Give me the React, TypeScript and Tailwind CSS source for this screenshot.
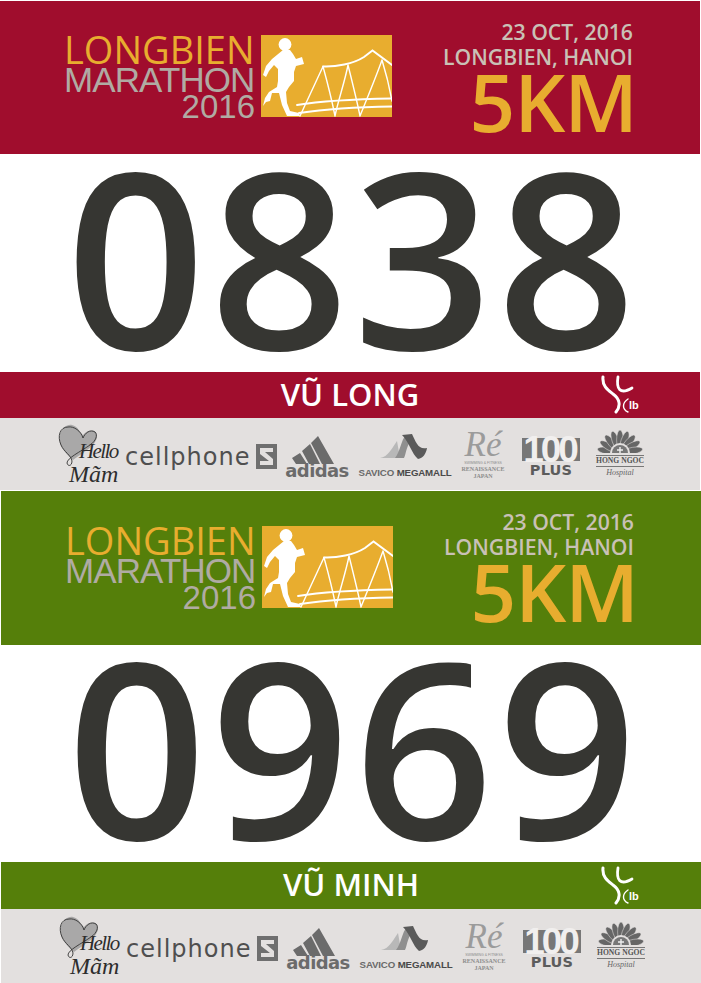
import React from 'react';

const openSans = "font-['Open_Sans',sans-serif]";
const arial = "font-['Liberation_Sans',Arial,sans-serif]";
const dejavu = "font-['DejaVu_Sans',sans-serif]";
const serif = "font-['Liberation_Serif',serif]";

const petals = [-80, -60, -40, -20, 0, 20, 40, 60, 80];

function LogoMark() {
  return (
    <svg viewBox="0 0 131 82" className="w-[131px] h-[82px] shrink-0 bg-[#e8ad2f]">
      {/* runner */}
      <g fill="#fff">
        <circle cx="24" cy="9.5" r="6.4" />
        <path d="M22 15 L29 15 L32 19 L35 24 L41 22 L43 29 L35 31 L33 37 L33 46 L28 52 L25 57 L26 68 L29 76 L38 78 L39 81 L26 81 L21 70 L18 58 L11 58 L9 66 L5 67 L2 71 L4 63 L8 57 L16 52 L17 46 L17 34 L13 30 L8 36 L5 42 L2 40 L5 31 L11 24 Z" />
      </g>
      {/* bridge */}
      <g fill="none" stroke="#fff" strokeWidth="1.4" strokeLinecap="round">
        <path d="M62 31.5 C75 32 92 29 103 22 L111.5 15.5 L131 30" strokeWidth="2" />
        <path d="M62 31.5 L39 81 M62 31.5 C66 46 71 66 74 81 M87 30 C84 46 77 66 74 81 M87 30 C91 46 96 66 99 81 M121 25 C115 42 105 66 99 81 M121 25 C125 38 129 55 131 66" />
        <path d="M36 70 C60 66 100 64 131 63.5 M38 78 C65 74 100 72 131 71.5" strokeWidth="1.8" />
      </g>
    </svg>
  );
}

function LbMark() {
  return (
    <svg viewBox="0 0 40 40" className="w-[40px] h-[40px]">
      <g fill="none" stroke="#fff" strokeLinecap="round">
        <path d="M2 2 C1 11 7 15 12 19 C19 24 20 31 15 37" strokeWidth="3" />
        <path d="M17 2 C15 14 19 20 31 13" strokeWidth="2.8" />
        <path d="M27 24 C21 28 21 34 27 37" strokeWidth="1.4" />
      </g>
      <text x="28" y="34" fontSize="11" fontWeight="700" fill="#fff" fontFamily="'Liberation Sans',sans-serif">lb</text>
    </svg>
  );
}

function HelloMam() {
  return (
    <div className="relative w-[64px] h-[60px] shrink-0">
      <svg viewBox="0 0 64 60" className="absolute inset-0 w-full h-full">
        <path d="M16 1 C22 2 24 9 27 11 C32 5 41 5 41 12 C41 21 28 28 17 36 C5 26 2 18 4 10 C6 4 11 0 16 1 Z" fill="#a9a8a8" />
        <path d="M12 3 C4 3 1 12 5 21 C8 28 15 31 16 37 C16 42 12 43 11 39 C11 34 24 28 34 21 C40 17 42 11 39 8 C34 5 29 9 27 14 C25 7 18 2 12 3 Z" fill="none" stroke="#333" strokeWidth="0.9" />
      </svg>
      <span className={`absolute left-[23px] top-[17px] ${serif} italic text-[21px] leading-none tracking-[-1.6px] text-[#2d2d2d]`}>Hello</span>
      <span className={`absolute left-[13px] top-[38px] ${serif} italic text-[24px] leading-none text-[#2d2d2d]`}>Mãm</span>
    </div>
  );
}

function Cellphone() {
  return (
    <div className="flex items-center shrink-0 ml-[5px] mt-[5px]">
      <span className={`${dejavu} text-[24px] leading-none tracking-[1px] text-[#4f4f4f] w-[131px] whitespace-nowrap`}>cellphone</span>
      <svg viewBox="0 0 21 25" className="w-[21px] h-[25px]">
        <rect width="21" height="25" fill="#6f6f6f" />
        <path d="M4 4 H17 V8 H9 L17 15 V21 H4 V17 H13 L4 10 Z" fill="#e3e0df" />
      </svg>
    </div>
  );
}

function Adidas() {
  return (
    <div className="flex flex-col items-center w-[64px] ml-[8px] mt-[6px] shrink-0">
      <svg viewBox="0 0 42 28" className="w-[42px] h-[28px] mr-[9px]">
        <path d="M0 22 L8 17 L15 28 L4 28 Z M10 15 L18 8 L28 28 L17 28 Z M19 7 L26 0 L42 28 L30 28 Z" fill="#6b6b6b" />
      </svg>
      <span className={`${dejavu} text-[18px] leading-[14px] tracking-[-0.6px] font-bold text-[#6b6b6b]`}>adidas</span>
    </div>
  );
}

function Savico() {
  return (
    <div className="flex flex-col items-center w-[92px] ml-[10px] mt-[4px] shrink-0">
      <svg viewBox="0 0 47 25" className="w-[47px] h-[25px] mr-[4px]">
        <path d="M0 24 C8 23 12 14 17 7 L20 24 Z" fill="#b8b8b8" />
        <path d="M15 24 C20 18 21 6 26 1 L30 8 C26 14 26 20 24 24 Z" fill="#8f8f8f" />
        <path d="M22 1 L32 0 C36 8 38 16 47 14 C46 20 43 24 38 25 C32 20 29 8 22 1 Z" fill="#5a5a5a" />
      </svg>
      <div className={`${arial} text-[9.7px] leading-none mt-[9px] tracking-[-0.15px] whitespace-nowrap font-bold text-[#6a6a6a]`}>
        SAVICO <span className="text-[#4a4a4a]">MEGAMALL</span>
      </div>
    </div>
  );
}

function Renaissance() {
  return (
    <div className="flex flex-col items-center w-[36px] ml-[14px] shrink-0">
      <span className={`${serif} italic text-[35px] leading-[33px] text-[#9b9b9b]`}>Ré</span>
      <div className={`${arial} text-center text-[#8c8c8c]`}>
        <div className="text-[3.5px] leading-[5px] whitespace-nowrap">SWIMMING & FITNESS</div>
        <div className={`${serif} text-[6px] leading-[6px] font-bold`}>RENAISSANCE</div>
        <div className={`${serif} text-[6px] leading-[8px] font-bold`}>JAPAN</div>
      </div>
    </div>
  );
}

function HundredPlus() {
  return (
    <div className="flex flex-col items-center w-[58px] ml-[21px] mt-[4px] shrink-0">
      <div className="w-[58px] h-[28px] relative flex items-center justify-center">
        <div className="absolute inset-x-0 top-[3px] bottom-[2px] bg-[#777]" />
        <span className={`${arial} relative font-bold text-[37px] leading-none tracking-[-3px] pr-[3px] text-[#f1efee]`}>100</span>
      </div>
      <span className={`${dejavu} font-bold text-[14.5px] leading-[13px] mt-[1px] tracking-[0.2px] text-[#5c5c5c]`}>PLUS</span>
    </div>
  );
}

function HongNgoc() {
  return (
    <div className="flex flex-col items-center w-[48px] ml-[16px] shrink-0">
      <svg viewBox="0 0 48 25" className="w-[48px] h-[25px]">
        <g transform="translate(24 23)">
          {petals.map((deg) => (
            <ellipse key={deg} cx="0" cy="-13" rx="3.4" ry="10" fill="#666" stroke="#e3e0df" strokeWidth="0.5" transform={`rotate(${deg})`} />
          ))}
          <circle r="10" fill="#e3e0df" />
          <circle r="8" fill="#777" />
          <path d="M0 -6 V0 M-3 -3 H3" stroke="#eee" strokeWidth="1.4" />
        </g>
        <rect x="0" y="23" width="48" height="2" fill="#e3e0df" />
      </svg>
      <div className={`${serif} font-bold text-[7.6px] leading-[10px] whitespace-nowrap text-[#555] border-y border-[#777]`}>HONG NGOC</div>
      <div className={`${serif} italic text-[8px] leading-[12px] text-[#666]`}>Hospital</div>
    </div>
  );
}

type BibProps = {
  number: string;
  name: string;
  bg: string;
  wrap: string;
  head: string;
  body: string;
  band: string;
  logos: string;
};

function Bib({ number, name, bg, wrap, head, body, band, logos }: BibProps) {
  return (
    <section className={`w-[700px] ${wrap}`}>
      {/* Header */}
      <div className={`${bg} ${head} flex items-center pl-[64px] pr-[67px]`}>
        <div className="flex items-center gap-[4px] mb-[3px]">
          <div className="text-right w-[193px]">
            <div className={`${openSans} text-[38px] leading-[32px] pr-[3px] font-medium text-[#e8ad2f] whitespace-nowrap`}>LONGBIEN</div>
            <div className={`${arial} text-[35px] leading-[29px] pr-[3px] tracking-[-0.9px] text-[#b0aba3] whitespace-nowrap`}>MARATHON</div>
            <div className={`${arial} text-[33px] leading-[25px] pr-[2px] text-[#b0aba3]`}>2016</div>
          </div>
          <LogoMark />
        </div>
        <div className={`${openSans} ml-auto mb-[3px] text-right`}>
          <div className="text-[21.2px] leading-[25px] font-semibold text-[#c9c1b6]">23 OCT, 2016</div>
          <div className="text-[21.2px] leading-[25px] font-semibold text-[#c9c1b6] whitespace-nowrap">LONGBIEN, HANOI</div>
          <div className="text-[80px] leading-[66px] font-semibold text-[#e8ad2f] tracking-[-1px] -mr-[4px] -mt-[1px]">5KM</div>
        </div>
      </div>
      {/* Number */}
      <div className={`${body} bg-white flex items-center justify-center pb-[17px] pl-[6px]`}>
        <span className={`${openSans} text-[244px] leading-[200px] font-semibold tracking-[4px] text-[#363632]`}>{number}</span>
      </div>
      {/* Name */}
      <div className={`${bg} ${band} grid grid-cols-[1fr_auto_1fr] items-center`}>
        <div />
        <div className={`${openSans} text-[31px] leading-none pb-[2px] font-semibold text-white whitespace-nowrap`}>{name}</div>
        <div className="pl-[182px]"><LbMark /></div>
      </div>
      {/* Sponsors */}
      <div className={`${logos} bg-[#e3e0df] flex items-center pl-[56px]`}>
        <HelloMam />
        <Cellphone />
        <Adidas />
        <Savico />
        <Renaissance />
        <HundredPlus />
        <HongNgoc />
      </div>
    </section>
  );
}

export default function App() {
  return (
    <div className="w-[701px] h-[983px] bg-white overflow-hidden">
      <Bib
        number="0838"
        name="VŨ LONG"
        bg="bg-[#a00d2d]"
        wrap="mt-px"
        head="h-[153px]"
        body="h-[218px]"
        band="h-[46px]"
        logos="h-[72px]"
      />
      <Bib
        number="0969"
        name="VŨ MINH"
        bg="bg-[#557f0a]"
        wrap="mt-px ml-px"
        head="h-[154px]"
        body="h-[217px]"
        band="h-[47px]"
        logos="h-[74px]"
      />
    </div>
  );
}
